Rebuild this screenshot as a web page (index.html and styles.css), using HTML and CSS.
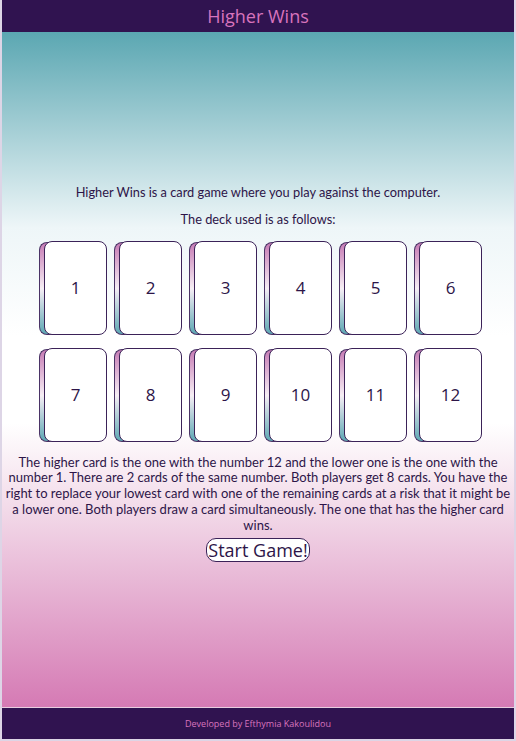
FILE: index.html
```html
<!DOCTYPE html>
<html lang="en">
<head>
<meta charset="utf-8">
<title>Higher Wins</title>
<link rel="stylesheet" href="styles.css">
</head>
<body>
<div class="page">
  <header class="site-header">
    <h1 class="title">Higher Wins</h1>
  </header>
  <main class="main">
    <p class="intro">Higher Wins is a card game where you play against the computer.</p>
    <p class="intro">The deck used is as follows:</p>
    <div class="deck">
      <div class="card">1</div>
      <div class="card">2</div>
      <div class="card">3</div>
      <div class="card">4</div>
      <div class="card">5</div>
      <div class="card">6</div>
      <div class="card">7</div>
      <div class="card">8</div>
      <div class="card">9</div>
      <div class="card">10</div>
      <div class="card">11</div>
      <div class="card">12</div>
    </div>
    <p class="rules">The higher card is the one with the number 12 and the lower one is the one with the number 1. There are 2 cards of the same number. Both players get 8 cards. You have the right to replace your lowest card with one of the remaining cards at a risk that it might be a lower one. Both players draw a card simultaneously. The one that has the higher card wins.</p>
    <button class="start" type="button">Start Game!</button>
  </main>
  <footer class="site-footer">Developed by Efthymia Kakoulidou</footer>
</div>
</body>
</html>
```
FILE: styles.css
```css
html, body {
  margin: 0;
  padding: 0;
  height: 100%;
}
body {
  background: #ddd5e6;
  font-family: "Lato", "Open Sans", sans-serif;
  color: #2d1548;
}
.page {
  box-sizing: border-box;
  height: 741px;
  margin: 0 2px;
  padding-bottom: 2px;
  display: flex;
  flex-direction: column;
}
.site-header {
  background: #301350;
  height: 32px;
  display: flex;
  align-items: center;
  justify-content: center;
}
.title {
  margin: 0;
  font-family: "Open Sans", sans-serif;
  font-size: 18px;
  font-weight: 500;
  color: #d873bd;
}
.main {
  flex: 1;
  display: flex;
  flex-direction: column;
  align-items: center;
  justify-content: center;
  padding-top: 2px;
  background: linear-gradient(#5ba7b2 0%, #eef6f8 29%, #ffffff 45%, #ffffff 58%, #f3dcea 70%, #d57ab4 100%);
  border-bottom: 1px solid #e8cde0;
}
.intro {
  margin: 6px 0;
  font-size: 12.8px;
  line-height: 15px;
  text-align: center;
}
.deck {
  position: relative;
  z-index: 0;
  display: grid;
  grid-template-columns: repeat(6, 63px);
  gap: 13px 12px;
  margin: 8px 0 13px;
  padding-left: 10px;
}
.card {
  position: relative;
  box-sizing: border-box;
  height: 94px;
  background: #fff;
  border: 1px solid #3b2258;
  border-radius: 8px;
  display: flex;
  align-items: center;
  justify-content: center;
  font-family: "Open Sans", sans-serif;
  font-size: 17px;
}
.card::before {
  content: "";
  position: absolute;
  left: -6px;
  top: 0;
  bottom: -1px;
  width: 30px;
  border: 1px solid #4a3366;
  border-right: none;
  border-radius: 8px 0 0 8px;
  background: linear-gradient(#c77cb5, #f6eef4 50%, #5ea8b4);
  z-index: -1;
}
.rules {
  margin: 0 3px;
  font-size: 13px;
  line-height: 15.7px;
  text-align: center;
}
.start {
  margin-top: 5px;
  font-family: "Open Sans", sans-serif;
  font-size: 18px;
  line-height: 20px;
  color: #2d1548;
  background: #fff;
  border: 1px solid #3b2258;
  border-radius: 10px;
  padding: 1px 1px;
}
.site-footer {
  background: #301350;
  height: 31px;
  display: flex;
  align-items: center;
  justify-content: center;
  font-family: "Open Sans", sans-serif;
  font-size: 9px;
  color: #d873bd;
}
```
